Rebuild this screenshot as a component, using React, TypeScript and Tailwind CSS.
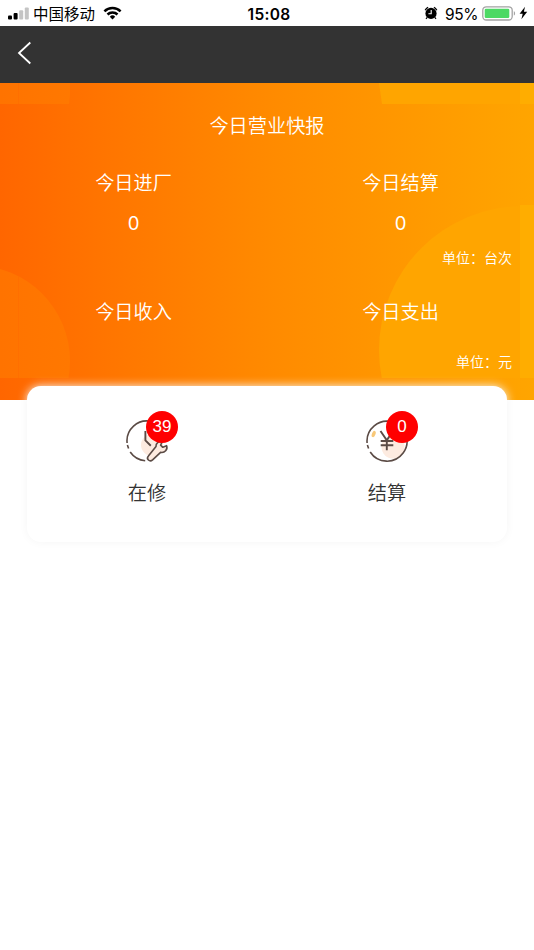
import type { ReactNode } from 'react'

function StatusBar() {
  return (
    <div className="h-[26px] bg-white text-black flex items-center justify-between pl-2 pr-[6px] relative">
      <div className="flex items-center">
        <svg width="21" height="13" viewBox="0 0 21 13" className="mt-px">
          <rect x="0" y="8.5" width="4" height="4" rx="1" />
          <rect x="5.6" y="6" width="4" height="6.5" rx="1" />
          <rect x="11.2" y="3.2" width="4" height="9.3" rx="1" fill="#c4c4c4" />
          <rect x="16.8" y="0.5" width="4" height="12" rx="1" fill="#c4c4c4" />
        </svg>
        <span className="ml-1 -mt-px text-[15.5px] leading-[26px]">中国移动</span>
        <svg width="19" height="14" viewBox="0 0 19 14" className="ml-2" fill="none" stroke="#000" strokeWidth="2.5">
          <path d="M1.4 5.3a11.6 11.6 0 0 1 16.2 0" />
          <path d="M4.5 8.5a7.1 7.1 0 0 1 10 0" />
          <path d="M9.5 13.4 6.8 10.7a3.8 3.8 0 0 1 5.4 0Z" fill="#000" stroke="none" />
        </svg>
      </div>
      <span className="absolute inset-x-0 top-[1.5px] text-center pl-1 text-[15.5px] leading-[26px] font-semibold tracking-[0.3px] font-['Inter','Liberation_Sans',sans-serif]">
        15:08
      </span>
      <div className="flex items-center">
        <svg width="14" height="14" viewBox="0 0 14 14" className="-mr-px">
          <circle cx="7" cy="7.4" r="5.6" />
          <path d="M1.1 4.2a8 8 0 0 1 3-2.9M12.9 4.2a8 8 0 0 0-3-2.9M3.2 11.4l-1.2 1.5M10.8 11.4l1.2 1.5" stroke="#000" strokeWidth="1.2" />
          <path d="M7.2 4v3.7H4.4" stroke="#fff" strokeWidth="1.1" fill="none" />
        </svg>
        <span className="ml-2 mt-[3px] text-[15.5px] leading-[26px] font-['Inter','Liberation_Sans',sans-serif] tracking-[-0.4px]">95%</span>
        <svg width="35" height="15" viewBox="0 0 35 15" className="ml-1">
          <rect x="0.8" y="0.8" width="29.4" height="13.2" rx="3.5" fill="#fff" stroke="#a3a3a3" strokeWidth="1.3" />
          <rect x="2.7" y="2.7" width="24.6" height="9.4" rx="1.3" fill="#4cd964" />
          <path d="M31.8 5.2c1.7.6 1.7 3.8 0 4.4Z" fill="#a3a3a3" />
        </svg>
        <svg width="9" height="14" viewBox="0 0 9 14" className="ml-[2px]">
          <path d="M6 .8.6 7.8h3.1L2.4 13.2 8.2 5.8H4.9Z" />
        </svg>
      </div>
    </div>
  )
}

function NavBar() {
  return (
    <div className="h-[57px] bg-[#333333] flex items-center pl-[17px]">
      <svg width="14" height="24" viewBox="0 0 14 24" fill="none" stroke="#fff" strokeWidth="1.8" className="-mt-1">
        <path d="M13.3 1.5 2 12l11.3 10.5" />
      </svg>
    </div>
  )
}

function BannerPattern() {
  return (
    <svg className="absolute inset-0" width="534" height="317" viewBox="0 0 534 317">
      <defs>
        <linearGradient id="bubble" gradientUnits="userSpaceOnUse" x1="0" x2="70" y1="0" y2="0">
          <stop offset="0" stopColor="#ff7300" />
          <stop offset="1" stopColor="#ff7800" />
        </linearGradient>
        <clipPath id="tile">
          <rect width="534" height="295" />
        </clipPath>
      </defs>
      <path d="M0 0h70v12l-1 9H0Z" fill="url(#bubble)" />
      <path d="M379 0h155v21H382Z" fill="#ffa500" />
      <g clipPath="url(#tile)">
        <circle cx="-25.5" cy="278" r="95.5" fill="url(#bubble)" />
        <circle cx="523" cy="267" r="144" fill="#ffa500" />
      </g>
      <path d="M520 0h14v21h-14ZM520 122h14v173h-14Z" fill="#ffad00" />
      <path d="M18 0h1v21h-1ZM18 193h1v102h-1Z" fill="#ff6f00" />
    </svg>
  )
}

function Stat({ label, value }: { label: string; value?: string }) {
  return (
    <div className="flex-1 text-center">
      <p className="text-[19.2px] leading-7">{label}</p>
      {value && (
        <p className="mt-[13px] mb-px text-[18.6px] leading-7 font-normal font-['Inter','Liberation_Sans',sans-serif]">{value}</p>
      )}
    </div>
  )
}

function Banner() {
  return (
    <div className="relative h-[317px] bg-linear-to-r from-[#ff6600] via-[#ff8a00] to-[#ffa500] text-white font-[350]">
      <BannerPattern />
      <div className="relative pt-[28px]">
        <h1 className="text-center text-[19.2px] leading-7 font-[350]">今日营业快报</h1>
        <div className="flex mt-[29px]">
          <Stat label="今日进厂" value="0" />
          <Stat label="今日结算" value="0" />
        </div>
        <p className="mt-[9px] pr-[22px] text-right text-sm leading-5">单位：台次</p>
        <div className="flex mt-[30px]">
          <Stat label="今日收入" />
          <Stat label="今日支出" />
        </div>
        <p className="mt-[26px] pr-[22px] text-right text-sm leading-5">单位：元</p>
      </div>
    </div>
  )
}

function RepairIcon() {
  return (
    <svg width="44" height="44" viewBox="0 0 44 44" fill="none" stroke="#5b4b45" strokeWidth="1.6">
      <circle cx="27" cy="26" r="11" fill="#fdebe0" stroke="none" />
      <path d="M26 2.3A20 20 0 0 0 2.1 24M2.4 26l1.2 3.6M5.2 33a20 20 0 0 0 15 8.7" />
      <path d="M20.4 12v9.4l5.4 5.3" strokeWidth="1.9" />
      <path
        d="M31 27.5c-.3-3.1 2.6-5.4 6.2-4.9l-1.6 3.6 2.2 2.1 3.8-1.6c1.4 3.8-1.9 7.5-6 6.6l-8 7.6c-2.9 2.6-6.8-1-4.2-4Z"
        fill="#fdebe0"
        strokeLinejoin="round"
      />
    </svg>
  )
}

function SettleIcon() {
  return (
    <svg width="44" height="44" viewBox="0 0 44 44" fill="none" stroke="#5b4b45" strokeWidth="1.6">
      <circle cx="28" cy="28" r="11.5" fill="#fdebe0" stroke="none" />
      <path d="M2.1 24A20 20 0 1 1 5.2 33M2.4 26l1.2 3.6" />
      <ellipse cx="8.7" cy="15" rx="1.8" ry="3.3" transform="rotate(20 8.7 15)" fill="#f8c878" stroke="none" />
      <path d="m15.5 12 6.3 9.3L28 12M15.7 22h12.6M15.7 26.2h12.6M21.8 21v10.3" strokeWidth="1.9" />
    </svg>
  )
}

function Entry({ icon, label, count }: { icon: ReactNode; label: string; count: number }) {
  return (
    <div className="flex-1 flex flex-col items-center pt-[33px]">
      <div className="relative">
        {icon}
        <span className="absolute -top-[8.5px] left-[21px] size-8 rounded-full bg-[#ff0000] text-white text-[17px] leading-8 text-center font-['Liberation_Sans',sans-serif]">
          {count}
        </span>
      </div>
      <p className="mt-[15px] text-[19.2px] leading-7 text-[#333333] font-[350]">{label}</p>
    </div>
  )
}

export default function App() {
  return (
    <div className="min-h-[950px] w-full bg-white font-['Noto_Sans_CJK_SC','Liberation_Sans',sans-serif]">
      <StatusBar />
      <NavBar />
      <Banner />
      <div className="relative -mt-[14px] mx-[27px] h-[156px] rounded-[14px] bg-white flex shadow-[0_0_10px_#f5f5f5]">
        <Entry icon={<RepairIcon />} label="在修" count={39} />
        <Entry icon={<SettleIcon />} label="结算" count={0} />
      </div>
    </div>
  )
}
